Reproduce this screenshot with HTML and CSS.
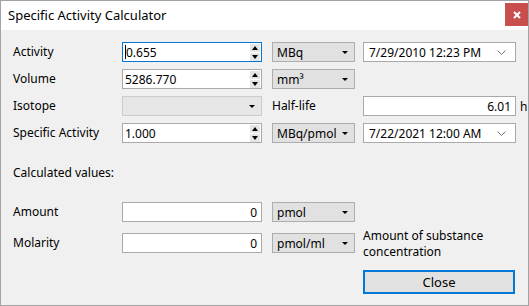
FILE: index.html
```html
<!DOCTYPE html>
<html>
    <head>
        <meta charset="utf-8" />
        <title>Specific Activity Calculator</title>
        <link rel="stylesheet" href="styles.css">
    </head>
    <body>
        <div class="window">
            <div class="titlebar">
                <span class="title">Specific Activity Calculator</span>
                <span class="close_x">
                    <svg width="8" height="8" viewBox="0 0 8 8"><path d="M1 1 L7 7 M7 1 L1 7" stroke="#fff" stroke-width="2"/></svg>
                </span>
            </div>
            <div class="content">
                <div class="form_grid">
                    <label class="lbl">Activity</label>
                    <div class="field spin_field focused">
                        <span class="val"><span class="caret"></span>0.655</span>
                        <span class="spin"><span class="up"></span><span class="down"></span></span>
                    </div>
                    <div class="combo"><span>MBq</span><span class="arrow"></span></div>
                    <div class="field date"><span class="val">7/29/2010 12:23 PM</span>
                        <svg class="chev" width="9" height="5" viewBox="0 0 9 5"><path d="M0.5 0.5 L4.5 4.5 L8.5 0.5" fill="none" stroke="#777" stroke-width="1"/></svg>
                    </div>
                    <span></span>

                    <label class="lbl">Volume</label>
                    <div class="field spin_field">
                        <span class="val">5286.770</span>
                        <span class="spin"><span class="up"></span><span class="down"></span></span>
                    </div>
                    <div class="combo"><span>mm³</span><span class="arrow"></span></div>
                    <span></span>
                    <span></span>

                    <label class="lbl">Isotope</label>
                    <div class="combo wide disabled"><span></span><span class="arrow"></span></div>
                    <label class="lbl">Half-life</label>
                    <div class="field right"><span class="val">6.01</span></div>
                    <span class="unit">h</span>

                    <label class="lbl">Specific Activity</label>
                    <div class="field spin_field">
                        <span class="val">1.000</span>
                        <span class="spin"><span class="up"></span><span class="down"></span></span>
                    </div>
                    <div class="combo"><span>MBq/pmol</span><span class="arrow"></span></div>
                    <div class="field date"><span class="val">7/22/2021 12:00 AM</span>
                        <svg class="chev" width="9" height="5" viewBox="0 0 9 5"><path d="M0.5 0.5 L4.5 4.5 L8.5 0.5" fill="none" stroke="#777" stroke-width="1"/></svg>
                    </div>
                    <span></span>
                </div>

                <p class="section_lbl">Calculated values:</p>

                <div class="form_grid results">
                    <label class="lbl">Amount</label>
                    <div class="field right wide"><span class="val">0</span></div>
                    <div class="combo"><span>pmol</span><span class="arrow"></span></div>
                    <span></span>
                    <span></span>

                    <label class="lbl">Molarity</label>
                    <div class="field right wide"><span class="val">0</span></div>
                    <div class="combo"><span>pmol/ml</span><span class="arrow"></span></div>
                    <p class="note">Amount of substance<br>concentration</p>
                    <span></span>

                    <span></span>
                    <span></span>
                    <span></span>
                    <button type="button" class="close_btn">Close</button>
                    <span></span>
                </div>
            </div>
        </div>
    </body>
</html>
```

FILE: styles.css
```css
* {
	padding: 0;
	margin: 0;
	box-sizing: border-box;
}
body {
	font-family: "Noto Sans", "Liberation Sans", sans-serif;
	font-size: 12px;
	color: #000;
	background: #fff;
}
.window {
	width: 529px;
	height: 306px;
	border: 1px solid #a3a3a3;
	background: #f0f0f0;
	display: flex;
	flex-direction: column;
}
.titlebar {
	height: 29px;
	background: #fff;
	display: flex;
	align-items: flex-start;
	justify-content: space-between;
}
.title {
	font-size: 13px;
	padding: 5px 0 0 7px;
}
.close_x {
	width: 23px;
	height: 23px;
	margin-top: 2px;
	background: #c94f4f;
	display: flex;
	align-items: center;
	justify-content: center;
}
.content {
	padding: 12px 0 0 12px;
}
.form_grid {
	display: grid;
	grid-template-columns: 109px 150px 91px 153px auto;
	grid-auto-rows: 20px;
	row-gap: 7px;
	align-items: center;
}
.lbl {
	line-height: 16px;
}
.field {
	width: 140px;
	height: 20px;
	background: #fff;
	border: 1px solid #a9a9a9;
	display: flex;
	align-items: center;
	padding: 0 2px 0 2px;
}
.focused {
	border-color: #0078d7;
}
.field .val {
	flex: 1;
	white-space: nowrap;
	display: flex;
	align-items: center;
}
.right .val {
	justify-content: flex-end;
	padding-right: 2px;
}
.right {
	width: 153px;
}
.right.wide {
	width: 140px;
}
.date {
	width: 153px;
	padding-left: 5px;
}
.chev {
	margin-right: 7px;
}
.caret {
	width: 1px;
	height: 14px;
	background: #000;
}
.spin {
	width: 10px;
	height: 17px;
	display: flex;
	flex-direction: column;
	gap: 1px;
	margin-right: -1px;
}
.spin span {
	flex: 1;
	background: #e5e5e5;
	display: flex;
	align-items: center;
	justify-content: center;
}
.spin .up::before {
	content: '';
	border-left: 3.5px solid transparent;
	border-right: 3.5px solid transparent;
	border-bottom: 4px solid #000;
}
.spin .down::before {
	content: '';
	border-left: 3.5px solid transparent;
	border-right: 3.5px solid transparent;
	border-top: 4px solid #000;
}
.combo {
	width: 83px;
	height: 20px;
	background: #e1e1e1;
	border: 1px solid #adadad;
	display: flex;
	align-items: center;
	justify-content: space-between;
	padding: 0 6px 0 4px;
}
.combo.wide {
	width: 140px;
}
.disabled {
	background: #e6e6e6;
	border-color: #cccccc;
}
.arrow {
	border-left: 3px solid transparent;
	border-right: 3px solid transparent;
	border-top: 3px solid #000;
}
.unit {
	padding-left: 4px;
}
.section_lbl {
	margin-top: 22px;
	line-height: 16px;
}
.results {
	margin-top: 21px;
	row-gap: 11px;
}
.note {
	line-height: 16px;
	align-self: start;
	margin-top: -5px;
}
.close_btn {
	width: 152px;
	height: 24px;
	margin-top: 16px;
	background: #e1e1e1;
	border: 2px solid #0078d7;
	font-family: inherit;
	font-size: 13px;
	color: #000;
}
```
